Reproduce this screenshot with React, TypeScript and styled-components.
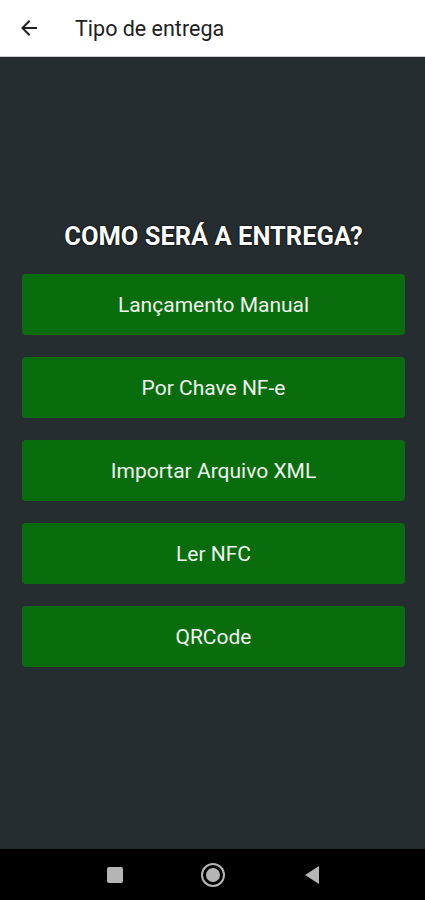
import React from 'react'
import styled, { createGlobalStyle } from 'styled-components'

const GlobalStyle = createGlobalStyle`
    html, body {
        margin: 0;
        padding: 0;
        background: #252d30;
        font-family: Roboto, "Liberation Sans", sans-serif;
    }
`;

const Screen = styled.div`
    display: flex;
    flex-direction: column;
    width: 425px;
    height: 900px;
    background: #252d30;
`;

const Header = styled.header`
    display: flex;
    align-items: center;
    height: 56px;
    padding: 0 0 0 17px;
    background: #ffffff;
    border-bottom: 1px solid #c9cbcc;
    box-sizing: content-box;
`;

const BackButton = styled.button`
    display: flex;
    align-items: center;
    justify-content: center;
    width: 24px;
    height: 24px;
    padding: 0;
    margin-right: 34px;
    border: none;
    background: transparent;
`;

const Title = styled.h1`
    margin: 0;
    font-size: 21.5px;
    font-weight: 400;
    color: #212121;
`;

const Content = styled.main`
    flex: 1;
    display: flex;
    flex-direction: column;
    padding: 164px 20px 0 22px;
`;

const Question = styled.h2`
    margin: 0 0 23px;
    text-align: center;
    font-size: 25.5px;
    line-height: 30px;
    font-weight: 700;
    color: #ffffff;
    text-shadow: 0 0 2px #000, 0 0 1px #000;
`;

const Options = styled.div`
    display: flex;
    flex-direction: column;
    gap: 22px;
`;

const OptionButton = styled.button`
    height: 61px;
    border: none;
    border-radius: 4px;
    background: #0a6d0d;
    color: #eef5ee;
    font-family: Roboto, "Liberation Sans", sans-serif;
    font-size: 21px;
    font-weight: 400;
    cursor: pointer;
`;

const NavBar = styled.nav`
    display: flex;
    align-items: center;
    justify-content: center;
    gap: 80px;
    height: 51px;
    background: #000000;
    padding-left: 2px;
`;

const NavSquare = styled.div`
    width: 16px;
    height: 16px;
    border-radius: 2px;
    background: #b5b5b5;
`;

const NavHome = styled.div`
    width: 14px;
    height: 14px;
    border-radius: 50%;
    background: #b5b5b5;
    border: 3px solid #000;
    box-shadow: 0 0 0 2px #b5b5b5;
`;

const options = [
    'Lançamento Manual',
    'Por Chave NF-e',
    'Importar Arquivo XML',
    'Ler NFC',
    'QRCode',
];

export default function App() {
    return (
        <>
            <GlobalStyle />
            <Screen>
                <Header>
                    <BackButton aria-label="Voltar">
                        <svg width="24" height="24" viewBox="0 0 24 24">
                            <path d="M20 11H7.83l5.59-5.59L12 4l-8 8 8 8 1.41-1.41L7.83 13H20v-2z" fill="#212121" />
                        </svg>
                    </BackButton>
                    <Title>Tipo de entrega</Title>
                </Header>
                <Content>
                    <Question>COMO SERÁ A ENTREGA?</Question>
                    <Options>
                        {options.map((label) => (
                            <OptionButton key={label}>{label}</OptionButton>
                        ))}
                    </Options>
                </Content>
                <NavBar>
                    <NavSquare />
                    <NavHome />
                    <svg width="18" height="20" viewBox="0 0 18 20">
                        <path d="M16 1 L2 10 L16 19 Z" fill="#b5b5b5" />
                    </svg>
                </NavBar>
            </Screen>
        </>
    )
}
